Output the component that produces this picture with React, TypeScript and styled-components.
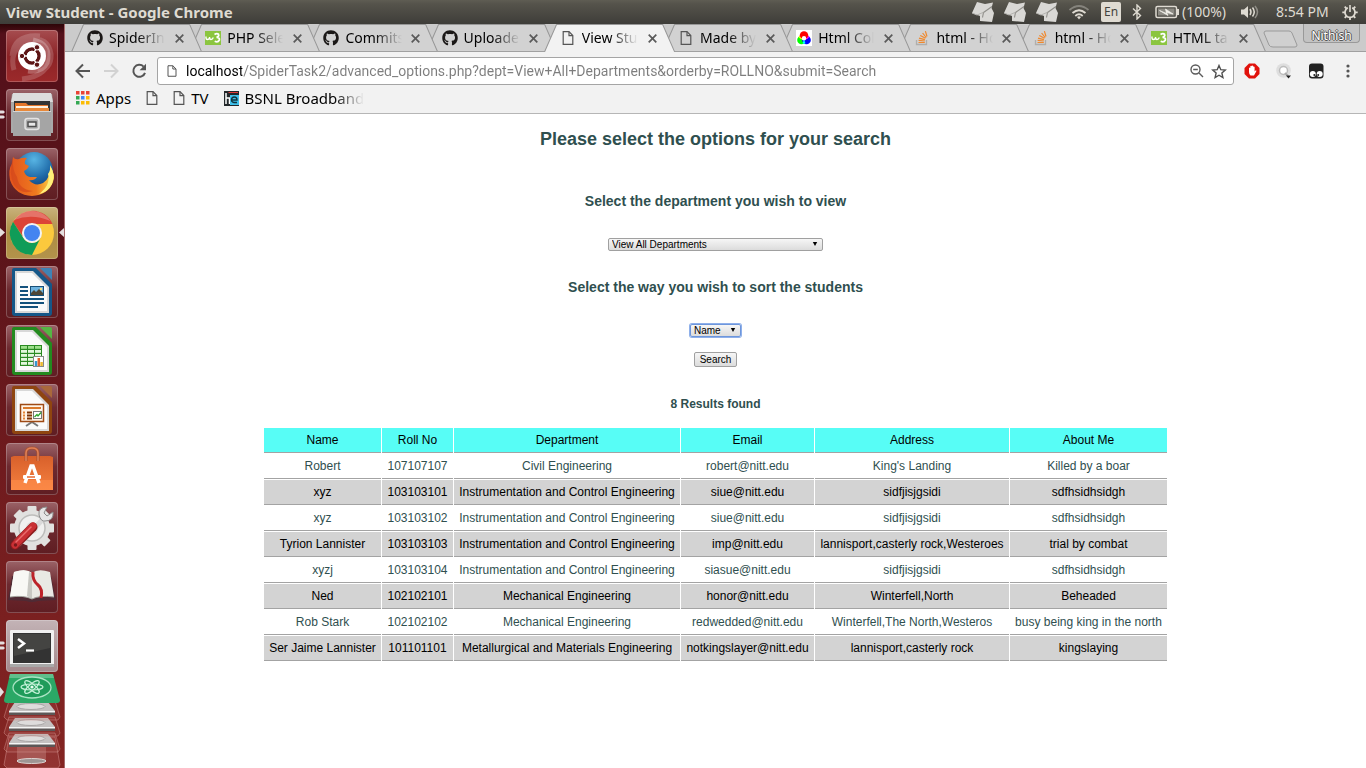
import React from "react";
import styled, { createGlobalStyle, css } from "styled-components";
import { FaGithub } from "react-icons/fa";

const GlobalStyle = createGlobalStyle`
  * { box-sizing: border-box; }
  html, body { margin: 0; padding: 0; }
  body { background: #fff; font-family: "Noto Sans", "Open Sans", sans-serif; }
  button { font: inherit; margin: 0; padding: 0; border: 0; background: none; color: inherit; }
  svg { display: block; flex: none; }
`;

/* ---------- desktop shell ---------- */

const Desktop = styled.div`
  min-height: 100vh;
  display: flex;
  flex-direction: column;
`;

const MenuBar = styled.header`
  height: 24px;
  flex: none;
  display: flex;
  justify-content: space-between;
  align-items: center;
  padding: 0 8px 0 6px;
  background: linear-gradient(#5f5d53 0, #55534b 4px, #3e3d39 24px);
  color: #dfdbd2;
`;

const WindowTitle = styled.div`
  font-size: 15px;
  line-height: 24px;
  font-weight: 700;
`;

const Tray = styled.div`
  display: grid;
  grid-template-columns: 32px 32px 32px 33px 31px 23px 27px 58px 36px 66px 16px;
  align-items: center;
  height: 24px;
  font-size: 14px;
  line-height: 24px;
  white-space: nowrap;
`;

const LanguageBadge = styled.button`
  width: 20px;
  height: 20px;
  border-radius: 2px;
  background: #dfdbd2;
  color: #45433d;
  font-size: 12px;
  line-height: 20px;
`;

const Body = styled.div`
  flex: 1;
  display: flex;
`;

const Launcher = styled.nav`
  width: 65px;
  flex: none;
  padding: 6px 6px 0;
  border-right: 1px solid #a5696a;
  background: linear-gradient(#2d0508 0, #54101a 10px, #5b141a 30%, #701b1e 60%, #842522 100%);
`;

const TileList = styled.div`
  display: flex;
  flex-direction: column;
  gap: 7px;
`;

const tileTone = {
  plain: "linear-gradient(#9b6368 0, #6d2a30 45%, #5f1d22 100%)",
  red: "linear-gradient(#a64d50, #8c2326 50%, #9c2a2b)",
  gold: "linear-gradient(#c9b27c, #ad8d43 50%, #b3934b)",
  pale: "linear-gradient(#c3b3b6, #a3898c)",
};

const Tile = styled.button<{ $tone: keyof typeof tileTone }>`
  position: relative;
  display: block;
  width: 52px;
  height: 52px;
  border-radius: 4px;
  background: ${(p) => tileTone[p.$tone]};
  box-shadow: inset 0 0 0 1px rgba(255, 255, 255, 0.22);
`;

const Pips = styled.svg<{ $side: "left" | "right" }>`
  position: absolute;
  top: 20px;
  ${(p) => (p.$side === "left" ? css`left: -6px;` : css`right: -6px;`)}
`;

const Stack = styled.div`
  padding-top: 1px;
  margin: 0 -6px;
`;

/* ---------- browser chrome ---------- */

const Browser = styled.div`
  flex: 1;
  min-width: 0;
  display: flex;
  flex-direction: column;
`;

const TabStrip = styled.div`
  height: 28px;
  flex: none;
  display: flex;
  align-items: flex-start;
  justify-content: space-between;
  padding: 0 6px 0 6px;
  background: #cbcbcb;
  border-bottom: 1px solid #a0a0a0;
`;

const Tabs = styled.div`
  display: flex;
  flex: 0 1 1192px;
  min-width: 0;
  padding-right: 10px;
`;

const Tab = styled.div<{ $order: number }>`
  position: relative;
  z-index: ${(p) => p.$order};
  flex: 1 1 0;
  min-width: 0;
  height: 28px;
  margin-right: -13px;
  padding: 0 17px 0 16px;
  display: flex;
  align-items: center;
  gap: 6px;
  isolation: isolate;
`;

const TabShape = styled.svg`
  position: absolute;
  inset: 0;
  width: 100%;
  height: 28px;
  z-index: -1;
`;

const Favicon = styled.span`
  width: 16px;
  flex: none;
  display: flex;
  justify-content: center;
`;

const TabTitle = styled.span`
  flex: 1;
  min-width: 0;
  white-space: nowrap;
  font-size: 14px;
  line-height: 28px;
  color: #000;
  mask-image: linear-gradient(90deg, #000 calc(100% - 30px), transparent calc(100% - 2px));
`;

const IconButton = styled.button<{ $w: number }>`
  width: ${(p) => p.$w}px;
  height: 28px;
  flex: none;
  display: flex;
  align-items: center;
  justify-content: center;
`;

const StripEnd = styled.div`
  flex: 1;
  display: flex;
  justify-content: space-between;
  align-items: flex-start;
`;

const NewTab = styled.button`
  height: 28px;
  padding: 2px 0 0 0;
  display: flex;
  align-items: center;
`;

const Profile = styled.button`
  width: 57px;
  height: 19px;
  padding-top: 3px;
  border: 1px solid #999;
  border-top: 0;
  border-radius: 0 0 4px 4px;
  background: #c3c3c3;
  color: #fff;
  font-size: 12px;
  line-height: 18px;
  text-align: center;
  text-shadow: 1px 0 #555, -1px 0 #555, 0 1px #555, 0 -1px #555;
`;

const Toolbar = styled.div`
  flex: none;
  height: 62px;
  background: #f2f2f2;
  border-bottom: 1px solid #b6b6b6;
`;

const NavRow = styled.div`
  display: flex;
  align-items: center;
  padding: 5px 2px 0 4px;
`;

const NavButtons = styled.div`
  display: flex;
  width: 88px;
`;

const AddressBar = styled.div`
  flex: 1;
  min-width: 0;
  height: 28px;
  display: flex;
  align-items: center;
  padding: 0 3px 0 9px;
  border: 1px solid #a5a5a5;
  border-radius: 3px;
  background: #fff;
`;

const AddressInput = styled.input`
  flex: 1;
  min-width: 0;
  height: 26px;
  margin-left: 9px;
  padding: 0;
  border: 0;
  outline: 0;
  font-family: Roboto, "Noto Sans", sans-serif;
  font-size: 14px;
  background: linear-gradient(90deg, #000 56px, #7d7d7d 56px);
  background-clip: text;
  -webkit-text-fill-color: transparent;
`;

const Extensions = styled.div`
  display: flex;
  padding-left: 2px;
`;

const BookmarkRow = styled.div`
  display: flex;
  align-items: center;
  height: 26px;
  padding-left: 11px;
  gap: 15px;
`;

const Bookmark = styled.a<{ $fade?: boolean }>`
  display: flex;
  align-items: center;
  gap: 6px;
  white-space: nowrap;
  color: #000;
  text-decoration: none;
  font-size: 15px;
  line-height: 24px;
  ${(p) =>
    p.$fade &&
    css`
      mask-image: linear-gradient(90deg, #000 calc(100% - 30px), transparent);
    `}
`;

/* ---------- page ---------- */

const Page = styled.main`
  flex: 1;
  padding: 14px 8px 40px;
  display: flex;
  flex-direction: column;
  align-items: center;
  background: #fff;
  color: #2f4f4f;
  font-family: "Liberation Sans", Arial, sans-serif;
  font-size: 12px;
`;

const SearchForm = styled.form`
  display: flex;
  flex-direction: column;
  align-items: center;
`;

const PageTitle = styled.h2`
  margin: 0;
  font-size: 18px;
  line-height: 22px;
`;

const Question = styled.label<{ $top: number }>`
  margin: ${(p) => p.$top}px 0 28px;
  font-size: 14px;
  font-weight: 700;
  line-height: 18px;
`;

const controlLook = css`
  border: 1px solid #a0a0a0;
  border-radius: 2px;
  background: linear-gradient(#f6f6f6, #dcdcdc);
  color: #000;
  font-family: "Liberation Sans", Arial, sans-serif;
  font-size: 10px;
`;

const SelectBox = styled.span<{ $w: number }>`
  position: relative;
  display: block;
  width: ${(p) => p.$w}px;
`;

const Select = styled.select<{ $active?: boolean }>`
  ${controlLook}
  display: block;
  width: 100%;
  height: 13px;
  margin: 0;
  padding: 0 3px;
  line-height: 11px;
  appearance: none;
  outline: 0;
  ${(p) =>
    p.$active &&
    css`
      border-color: #6d96dc;
      box-shadow: 0 0 0 1px #8fb0ea;
    `}
`;

const Arrow = styled.svg`
  position: absolute;
  right: 5px;
  top: 4px;
  pointer-events: none;
`;

const SubmitButton = styled.button`
  ${controlLook}
  width: 43px;
  height: 15px;
  margin-top: 15px;
  line-height: 13px;
`;

const ResultCount = styled.h4`
  margin: 30px 0 16px;
  font-size: 12px;
  line-height: 14px;
`;

const Results = styled.table`
  border-collapse: separate;
  border-spacing: 1px;
  text-align: center;
  line-height: 14px;

  th, td {
    padding: 5px;
    border-bottom: 1px solid #a3a3a3;
    white-space: nowrap;
    font-weight: 400;
  }
  th {
    background: #57fdf6;
    color: #000;
  }
  tbody tr:nth-child(even) td {
    background: #d3d3d3;
    color: #000;
  }
`;

const HeadCell = styled.th<{ $w: number }>`
  width: ${(p) => p.$w}px;
`;

/* ---------- small icons ---------- */

const DocIcon = ({ s = 14 }: { s?: number }) => (
  <svg width={s === 14 ? 12 : 10} height={s} viewBox="0 0 12 14" fill="none" stroke="#555" strokeWidth="1.2">
    <path d="M1.2 .7H7L10.8 4.5V13.3H1.2Z" />
    <path d="M7 .7V4.6H10.8" />
  </svg>
);

const W3Icon = () => (
  <svg width="16" height="16" viewBox="0 0 16 16">
    <rect y="1" width="16" height="14" fill="#8bc53f" />
    <path d="M1 6.5V8Q1 9.5 2.5 9.5T4.5 8V7Q4.5 9.500 6 9.500T8.300 7.500" fill="none" stroke="#fff" strokeWidth="1.400" />
    <path d="M9.500 4.500Q12 3 13.500 4.300Q14.500 6.300 11.600 7.400Q15 7.500 14.300 10.200Q13 12.800 9.700 11.300" fill="none" stroke="#fff" strokeWidth="1.800" />
  </svg>
);

const ColorIcon = () => (
  <svg width="16" height="16" viewBox="0 0 16 16">
    <rect width="16" height="16" fill="#fff" />
    <circle cx="5.500" cy="10" r="4.300" fill="#0f0" />
    <circle cx="10.500" cy="10" r="4.300" fill="#00f" />
    <circle cx="8" cy="5.500" r="4.300" fill="#f00" />
    <path d="M3.800 6Q4.500 8.500 8 9.800Q4.500 10 2.500 7Z" fill="#ff0" />
    <path d="M12.200 6Q11.500 8.500 8 9.800Q11.500 10 13.500 7Z" fill="#f0f" />
    <path d="M8 9.500L6.500 13.300Q8 14 9.500 13.300Z" fill="#0ff" />
    <circle cx="8" cy="8.300" r="2.200" fill="#fff" />
  </svg>
);

const StackIcon = () => (
  <svg width="16" height="16" viewBox="0 0 16 16" fill="none">
    <path d="M2.500 10V14.500H12.500V10" stroke="#b0aeac" strokeWidth="1.300" />
    <g stroke="#f0882c" strokeWidth="1.200">
      <path d="M4.500 12.500H10.800M4.600 10.300L10.800 11M5 8.100L10.900 9.600M6.300 5.400L11.500 8.300M8.600 3L12.200 7.500M11.400 1.200L13 6.500" />
    </g>
  </svg>
);

const CardsIcon = () => (
  <svg width="22" height="22" viewBox="0 0 22 22">
    <path d="M5 1L13 3L21 1.500L19.500 7L22 12L20 21L8 20L8 15L0 12Z" fill="#d9d8d5" />
    <path d="M0 12L5 14L11 11.500" stroke="#b4b3af" fill="none" />
    <path d="M20 5.500L11.500 11.500M11.500 11.500L10.500 16.500" stroke="#8f8e89" strokeWidth="1.100" fill="none" />
  </svg>
);

const WifiIcon = () => (
  <svg width="22" height="16" viewBox="0 0 22 16" fill="none" strokeWidth="1.800">
    <path d="M1.500 6Q11-2 20.500 6" stroke="#85837c" />
    <path d="M4.500 9Q11 3.500 17.500 9" stroke="#dfdbd2" />
    <path d="M7.300 12Q11 8.500 14.700 12" stroke="#dfdbd2" />
    <path d="M9 13L11 15.500L13 13Q11 11.500 9 13Z" fill="#dfdbd2" />
  </svg>
);

const BluetoothIcon = () => (
  <svg width="10" height="16" viewBox="0 0 10 16" fill="none" stroke="#dfdbd2" strokeWidth="1.400">
    <path d="M1 4.500L8.500 11.500L5 15V1L8.500 4.500L1 11.500" />
  </svg>
);

const BatteryIcon = () => (
  <svg width="25" height="14" viewBox="0 0 25 14">
    <rect x="1" y="1.500" width="20.500" height="11" rx="1.500" fill="none" stroke="#dfdbd2" strokeWidth="1.500" />
    <rect x="3" y="3.500" width="16.500" height="7" fill="#8d8b84" />
    <rect x="22" y="4" width="2" height="6" fill="#dfdbd2" />
    <path d="M4.500 5.500L11.500 8.500L10.500 4L18 9L11.500 7.500L13 10.500Z" fill="#f2f0ea" stroke="#f2f0ea" strokeWidth=".7" />
  </svg>
);

const VolumeIcon = () => (
  <svg width="20" height="16" viewBox="0 0 20 16" fill="none" strokeWidth="1.500">
    <path d="M1 5.500H4L8 2V14L4 10.500H1Z" fill="#dfdbd2" />
    <path d="M10 5Q12 8 10 11" stroke="#dfdbd2" />
    <path d="M12.500 3.500Q16 8 12.500 12.500" stroke="#dfdbd2" />
    <path d="M15 2Q20 8 15 14" stroke="#8f8d86" />
  </svg>
);

const GearIcon = () => (
  <svg width="16" height="16" viewBox="0 0 16 16" fill="none" stroke="#dfdbd2">
    <path d="M5.800 3.800A5 5 0 1 0 10.200 3.800" strokeWidth="1.700" />
    <path d="M8 1V8" strokeWidth="1.600" />
    <path d="M2.700 2.700L4.600 4.600M13.300 2.700L11.400 4.600M.3 8.300H3M13 8.300H15.700M2.700 13.900L4.600 12M13.300 13.900L11.400 12M8 13.300V16" strokeWidth="1.800" />
  </svg>
);

const CloseIcon = () => (
  <svg width="9" height="9" viewBox="0 0 9 9" stroke="#5a5a5a" strokeWidth="1.700">
    <path d="M.7 .7L8.300 8.300M8.300 .7L.7 8.300" />
  </svg>
);

const BackIcon = ({ color, flip }: { color: string; flip?: boolean }) => (
  <svg width="16" height="16" viewBox="0 0 16 16" fill="none" stroke={color} strokeWidth="2">
    <path d={flip ? "M1 8H14M8 1.500L14.500 8L8 14.500" : "M15 8H2M8 1.500L1.500 8L8 14.500"} />
  </svg>
);

const ReloadIcon = () => (
  <svg width="16" height="16" viewBox="0 0 16 16">
    <path d="M12.600 3.600A6 6 0 1 0 14 9.800" fill="none" stroke="#555" strokeWidth="2" />
    <path d="M15 .8V7.200H8.600Z" fill="#555" />
  </svg>
);

const ZoomOutIcon = () => (
  <svg width="14" height="14" viewBox="0 0 14 14" fill="none" stroke="#5a5a5a" strokeWidth="1.400">
    <circle cx="5.500" cy="5.500" r="4.500" />
    <path d="M3.200 5.500H7.800M9 9L13 13" />
  </svg>
);

const StarIcon = () => (
  <svg width="16" height="15" viewBox="0 0 16 15" fill="none" stroke="#4f4f4f" strokeWidth="1.400">
    <path d="M8 1.500L9.800 5.700L14.300 6.100L10.900 9.100L11.900 13.500L8 11.200L4.100 13.500L5.100 9.100L1.700 6.100L6.200 5.700Z" />
  </svg>
);

const BlockIcon = () => (
  <svg width="16" height="16" viewBox="0 0 16 16">
    <path d="M5 .5H11L15.500 5V11L11 15.500H5L.5 11V5Z" fill="#e1120c" />
    <path d="M5 9V5Q5.700 4 6.300 5V3.200Q7 2.300 7.700 3.200V2.700Q8.500 2 9.200 2.900V3.700Q10 3 10.600 4V8.500L11.800 7.300Q13 7.500 12.200 8.500L10 12.500H6.500Q5 11 5 9Z" fill="#fff" />
  </svg>
);

const SearchBadgeIcon = () => (
  <svg width="16" height="16" viewBox="0 0 16 16">
    <circle cx="7.500" cy="7.500" r="7.300" fill="#dedede" />
    <circle cx="7.500" cy="7.500" r="4" fill="#fff" stroke="#bcbcbc" strokeWidth="1.500" />
    <path d="M9 10L12 13" stroke="#aaa" strokeWidth="2" />
    <path d="M10 12.500H15L12.500 15.500Z" fill="#222" />
  </svg>
);

const MonkeyIcon = () => (
  <svg width="16" height="16" viewBox="0 0 16 16">
    <rect x="1" y=".5" width="14.500" height="15" rx="3" fill="#222" />
    <circle cx="4.800" cy="11" r="3" fill="#fff" />
    <circle cx="11.700" cy="11" r="3" fill="#fff" />
    <circle cx="6.300" cy="12" r="1" fill="#222" />
    <circle cx="10.200" cy="12" r="1" fill="#222" />
  </svg>
);

const MenuIcon = () => (
  <svg width="4" height="14" viewBox="0 0 4 14" fill="#555">
    <circle cx="2" cy="2" r="1.600" />
    <circle cx="2" cy="7" r="1.600" />
    <circle cx="2" cy="12" r="1.600" />
  </svg>
);

const AppsIcon = () => (
  <svg width="14" height="14" viewBox="0 0 14 14">
    {["#ea4335", "#ea4335", "#ea4335", "#34a853", "#4285f4", "#fbbc05", "#34a853", "#fbbc05", "#fbbc05"].map((c, i) => (
      <rect key={i} x={(i % 3) * 5} y={Math.floor(i / 3) * 5} width="3.500" height="3.500" fill={c} />
    ))}
  </svg>
);

const BsnlIcon = () => (
  <svg width="15" height="15" viewBox="0 0 15 15">
    <rect width="15" height="15" fill="#23282b" />
    <path d="M4.500 1H14V2H4.500Z" fill="#e23b3b" />
    <path d="M2 2V13M2 7H5.500V13" stroke="#fff" strokeWidth="1.500" fill="none" />
    <rect x="6" y="4" width="9" height="10" fill="#3fc0ea" />
    <path d="M7.500 9H13Q13 6 10.300 6T7.500 9T13 11.500" stroke="#10343f" strokeWidth="1.400" fill="none" />
  </svg>
);

/* ---------- launcher artwork ---------- */

const art = { width: 52, height: 52, viewBox: "0 0 52 52" };

const DashArt = () => (
  <svg {...art}>
    <path d="M8 40Q2 18 24 10Q42 6 45 24Q46 38 32 42M16 49Q46 46 44 20M6 26Q8 4 34 6" fill="none" stroke="#fff" strokeOpacity=".18" strokeWidth="5" />
    <path d="M27 10Q46 14 41 33Q36 43 22 41" fill="none" stroke="#fff" strokeOpacity=".25" strokeWidth="5" />
    <circle cx="26" cy="26" r="14" fill="#fff" />
    <circle cx="26" cy="26" r="7" fill="none" stroke="#5c1414" strokeWidth="3.400" />
    <path d="M26 26L13 26M26 26L32.500 14.700M26 26L32.500 37.300" stroke="#fff" strokeWidth="1.500" />
    <circle cx="26" cy="26" r="5.200" fill="#fff" />
    <g fill="#5c1414" stroke="#fff">
      <circle cx="16" cy="26" r="2.700" />
      <circle cx="31" cy="17.300" r="2.700" />
      <circle cx="31" cy="34.700" r="2.700" />
    </g>
  </svg>
);

const FilesArt = () => (
  <svg {...art}>
    <path d="M6 5H46L47 14V44H5V14Z" fill="#a9a9a9" />
    <path d="M7 4H45L47 13H5Z" fill="#dcdcdc" />
    <rect x="8" y="12" width="36" height="12" fill="#343434" />
    <path d="M9 14H20L22 16H42V24H9Z" fill="#e5762a" />
    <path d="M10 17H42V19H10Z" fill="#fff1df" />
    <path d="M9 19H43V23H9Z" fill="#e8893a" />
    <path d="M7 22H45V47H7Z" fill="#a5a5a5" />
    <path d="M7 22H45V23H7Z" fill="#d6d6d6" />
    <rect x="19" y="29.500" width="14" height="11" rx="2.500" fill="#b0b0b0" stroke="#e3e3e3" strokeWidth="1.500" />
    <rect x="22" y="33" width="8" height="4.500" fill="#e8e8e8" stroke="#4e4e4e" strokeWidth="1.500" />
  </svg>
);

const FirefoxArt = () => (
  <svg {...art}>
    <defs>
      <radialGradient id="ffGlobe" cx=".5" cy=".2" r=".8">
        <stop offset="0" stopColor="#58b5e4" />
        <stop offset=".6" stopColor="#1f6aa8" />
        <stop offset="1" stopColor="#123c74" />
      </radialGradient>
      <linearGradient id="ffTail" x1="0" x2="1">
        <stop offset="0" stopColor="#e3541d" />
        <stop offset=".6" stopColor="#ee7a1f" />
        <stop offset="1" stopColor="#ffe04a" />
      </linearGradient>
    </defs>
    <circle cx="28" cy="23" r="19" fill="url(#ffGlobe)" />
    <path d="M7 9Q9 12 13 11Q17 9 21 10Q18 13 19 16L23 18Q22 21 18 23Q19 28 24 29L31 29Q28 33 23 32Q29 39 37 35Q45 30 44 18Q50 27 47 34Q42 47 26 48Q9 47 4 32Q2 21 6 16Z" fill="url(#ffTail)" />
    <path d="M7 10Q6 22 11 29Q13 42 27 43Q15 47 8 37Q2 25 7 10Z" fill="#d1441b" opacity=".6" />
    <path d="M44 17Q50 27 46 36Q42 44 33 46Q45 37 42 26Q45 22 44 17Z" fill="#ffef7a" />
  </svg>
);

const ChromeArt = () => (
  <svg {...art}>
    <circle cx="26" cy="26" r="22" fill="#fbc93d" />
    <path d="M7 15A22 22 0 0 1 46.500 17H26A9.500 9.500 0 0 0 17.500 30.500Z" fill="#dc4437" />
    <path d="M7 14.800A22 22 0 0 0 26 48L34.500 31A9.700 9.700 0 0 1 17.500 31Z" fill="#109c58" />
    <path d="M8 13A22 22 0 0 1 44.500 14Q26 6 8 13Z" fill="#fff" opacity=".25" />
    <circle cx="26" cy="26" r="10" fill="#f3f3f3" />
    <circle cx="26" cy="26" r="8" fill="#4484f0" />
  </svg>
);

const OfficeArt = ({ color, fold, children }: { color: string; fold: string; children: React.ReactNode }) => (
  <svg {...art}>
    <path d="M8 2H30L46 18V47Q46 50 43 50H9Q6 50 6 47V4Q6 2 8 2Z" fill={color} />
    <path d="M9 5H27L43 21V47H9Z" fill="#d8d8d8" />
    <path d="M11 7H26L41 22V45H11Z" fill="#fbfbfb" />
    <path d="M34 2H44Q46 2 46 4V14Z" fill={fold} />
    {children}
  </svg>
);

const WriterArt = () => (
  <OfficeArt color="#155788" fold="#3f83b5">
    <path d="M14 21H22M14 25H22M14 29H22M14 33H38M14 37H38M14 41H32" stroke="#13517c" strokeWidth="2" />
    <rect x="24.500" y="20.500" width="13" height="9" fill="#6cb2df" stroke="#174f78" />
    <path d="M25 29V27L28 24L30 26L33 23L37 27V29Z" fill="#4e4636" />
    <circle cx="35" cy="23" r="1.200" fill="#ffe27a" />
  </OfficeArt>
);

const CalcArt = () => (
  <OfficeArt color="#238a1f" fold="#55b544">
    <rect x="14" y="20" width="22" height="21" fill="#2a8a22" />
    {[0, 1, 2, 3, 4].map((r) =>
      [0, 1, 2].map((c) => (
        <rect key={`${r}-${c}`} x={15 + c * 7} y={21 + r * 4} width="6" height="2.800" fill={r === 0 ? "#9ee08c" : "#e2f7dc"} />
      ))
    )}
    <rect x="27.500" y="31.500" width="10" height="10" fill="#fff" stroke="#888" />
    <path d="M30 41V36" stroke="#3897cf" strokeWidth="2.500" />
    <path d="M32.800 41V33" stroke="#e2632b" strokeWidth="2.500" />
    <path d="M35.600 41V37" stroke="#edb92e" strokeWidth="2.500" />
  </OfficeArt>
);

const ImpressArt = () => (
  <OfficeArt color="#8f4510" fold="#a9683b">
    <path d="M26 38L20 42M26 38L32 42" stroke="#777" strokeWidth="2" />
    <rect x="14.500" y="20.500" width="23" height="17" fill="#fff4e7" stroke="#9e4a14" strokeWidth="1.500" />
    <path d="M17 24H35" stroke="#d9792c" strokeWidth="2" />
    <path d="M17 28.500H19M17 31.500H19M17 34.500H19" stroke="#e58636" strokeWidth="1.800" />
    <path d="M21 28.500H26M21 31.500H26M21 34.500H26" stroke="#7e3406" strokeWidth="1.800" />
    <rect x="27.500" y="27.500" width="8" height="7" fill="#fff" stroke="#777" />
    <path d="M28.500 33L31 30.500L32 32L35 28.500" fill="none" stroke="#2ba52b" strokeWidth="1.300" />
  </OfficeArt>
);

const SoftwareArt = () => (
  <svg {...art}>
    <defs>
      <linearGradient id="bag" x2="0" y2="1">
        <stop offset="0" stopColor="#d8602b" />
        <stop offset="1" stopColor="#f5803f" />
      </linearGradient>
    </defs>
    <path d="M5 14L8 13H44L47 14V47H5Z" fill="url(#bag)" />
    <path d="M5 37H47V47H5Z" fill="#ff8d4b" opacity=".6" />
    <path d="M20 18V10Q20 5 26 5T32 10V18" fill="none" stroke="#a8502f" strokeWidth="3" />
    <path d="M20 18V10Q20 5 26 5T32 10V18" fill="none" stroke="#e08158" strokeWidth="1.500" />
    <path d="M19 40L25 23H27L33 40" fill="none" stroke="#fff" strokeWidth="3.500" />
    <rect x="17" y="32" width="18" height="4" rx="1" fill="#fff" />
    <path d="M21 34H29" stroke="#e6672f" strokeWidth="1.500" />
  </svg>
);

const SettingsArt = () => (
  <svg {...art}>
    <g transform="translate(26 26)" fill="#e1e1df">
      <circle r="18" />
      {[0, 45, 90, 135, 180, 225, 270, 315].map((a) => (
        <rect key={a} x="-4.500" y="-22" width="9" height="9" rx="1" transform={`rotate(${a})`} />
      ))}
      <circle r="13" fill="#f0f0ef" stroke="#bdbdbb" strokeWidth="1.500" />
      <circle r="6" fill="#dcdcda" />
    </g>
    <path d="M21 34L38 16" stroke="#d9d9d9" strokeWidth="5" />
    <path d="M33 13Q32 5 41 5L38 11L41 14L47 10Q48 19 39 19Q35 20 33 13Z" fill="#e6e6e6" stroke="#8b8b8b" />
    <path d="M9 43L27 25" stroke="#8d1b1d" strokeWidth="9" strokeLinecap="round" />
    <path d="M9 43L27 24" stroke="#c93034" strokeWidth="7" strokeLinecap="round" />
    <path d="M10 40L25 25" stroke="#ea6c6d" strokeWidth="1.500" strokeLinecap="round" />
    <circle cx="9.500" cy="43" r="1.700" fill="#7a191b" />
  </svg>
);

const BookArt = () => (
  <svg {...art}>
    <path d="M6 15L2 39L20 40Q26 42 32 40L50 39L45 15Z" fill="#4f2b35" />
    <path d="M8 11Q20 7 26 12Q32 7 44 11L48 36Q34 34 26 38Q18 34 4 36Z" fill="#e9e9e4" />
    <path d="M8 11Q20 7 26 12V38Q18 34 4 36Z" fill="#f8f8f5" />
    <path d="M23 11L26 12V38L21 35Z" fill="#c8c8c3" />
    <path d="M4 36Q18 34 26 38Q34 34 48 36" fill="none" stroke="#a1a19b" />
    <path d="M27 11Q26 19 32 24Q37 28 35 37" fill="none" stroke="#bc2229" strokeWidth="3" />
  </svg>
);

const TerminalArt = () => (
  <svg {...art}>
    <rect x="4" y="10" width="44" height="37" rx="1" fill="#f1f1f1" />
    <rect x="4" y="44" width="44" height="3" fill="#a9a9a9" />
    <rect x="7" y="13" width="38" height="30" fill="#333" />
    <path d="M8 14H44V28L8 36Z" fill="#444442" />
    <path d="M12 19L18 23.500L12 28" fill="none" stroke="#fff" strokeWidth="2.500" />
    <path d="M20 30.500H28" stroke="#fff" strokeWidth="2.200" />
  </svg>
);

const FoldedStack = () => (
  <svg width="64" height="95" viewBox="0 0 64 95">
    <path d="M9 64L4 92L7 95H58L60 92L55 64Z" fill="#c8706e" fillOpacity=".2" stroke="#d79693" strokeOpacity=".5" />
    <path d="M17 73H46V88H17Z" fill="#c98b88" opacity=".4" />
    <ellipse cx="31.500" cy="88" rx="14.500" ry="2.500" fill="#9e9593" stroke="#ddd2d0" />
    {[32, 16, 0].map((y) => (
      <g key={y} transform={`translate(0 ${y})`}>
        <path d="M9 28L4 44L7 47H58L60 44L55 28Z" fill="#c8706e" fillOpacity=".15" stroke="#d79693" strokeOpacity=".45" />
        <path d="M15 29H48L55 38H9Z" fill="#c4c1c1" />
        <path d="M9 38H55V42H9Z" fill="#5c5757" />
        <path d="M9 38H55V39.500H9Z" fill="#f5f5f5" />
        <ellipse cx="31" cy="33.500" rx="14" ry="3" fill="#dedcdc" stroke="#a9a6a6" />
      </g>
    ))}
    <path d="M10 1H53L60 27Q60 30 57 30H7Q4 30 4 27Z" fill="#2ba866" />
    <path d="M10 1H53L54 5H9Z" fill="#77c99c" opacity=".7" />
    <ellipse cx="32" cy="14.500" rx="19" ry="10.500" fill="#1f9b5a" stroke="#a9e3c3" strokeWidth="1.300" />
    <g fill="none" stroke="#c4f1d8" strokeWidth="1.200">
      <ellipse cx="32" cy="14" rx="11" ry="3" />
      <ellipse cx="32" cy="14" rx="9" ry="3" transform="rotate(40 32 14)" />
      <ellipse cx="32" cy="14" rx="9" ry="3" transform="rotate(-40 32 14)" />
    </g>
    <circle cx="32" cy="14" r="1.600" fill="#eafff2" />
    <path d="M0 14L4 19L0 24Z" fill="#e5dfdf" />
  </svg>
);

const PairMark = () => (
  <Pips $side="left" width="5" height="12" viewBox="0 0 5 12" fill="#e5dfdf">
    <path d="M0 1.500H3.500L5 3L3.500 4.500H0ZM0 6.500H3.500L5 8L3.500 9.500H0Z" />
  </Pips>
);

const ActiveMarks = () => (
  <>
    <Pips $side="left" width="5" height="10" viewBox="0 0 5 10" fill="#e5dfdf">
      <path d="M0 1L5 5.500L0 10Z" />
    </Pips>
    <Pips $side="right" width="5" height="10" viewBox="0 0 5 10" fill="#e5dfdf">
      <path d="M5 1L0 5.500L5 10Z" />
    </Pips>
  </>
);

/* ---------- data ---------- */

type LauncherItem = { name: string; tone: keyof typeof tileTone; art: React.ReactNode; mark?: React.ReactNode };

const launcherItems: LauncherItem[] = [
  { name: "Dash", tone: "red", art: <DashArt /> },
  { name: "Files", tone: "plain", art: <FilesArt />, mark: <PairMark /> },
  { name: "Firefox", tone: "plain", art: <FirefoxArt /> },
  { name: "Chrome", tone: "gold", art: <ChromeArt />, mark: <ActiveMarks /> },
  { name: "Writer", tone: "plain", art: <WriterArt /> },
  { name: "Calc", tone: "plain", art: <CalcArt /> },
  { name: "Impress", tone: "plain", art: <ImpressArt /> },
  { name: "Software", tone: "plain", art: <SoftwareArt /> },
  { name: "Settings", tone: "plain", art: <SettingsArt /> },
  { name: "Dictionary", tone: "plain", art: <BookArt /> },
  { name: "Terminal", tone: "pale", art: <TerminalArt />, mark: <PairMark /> },
];

const tabs = [
  { title: "SpiderIn", icon: <FaGithub size={16} color="#1b1817" /> },
  { title: "PHP Sele", icon: <W3Icon /> },
  { title: "Commits", icon: <FaGithub size={16} color="#1b1817" /> },
  { title: "Uploade", icon: <FaGithub size={16} color="#1b1817" /> },
  { title: "View Stu", icon: <DocIcon />, active: true },
  { title: "Made by", icon: <DocIcon /> },
  { title: "Html Col", icon: <ColorIcon /> },
  { title: "html - Ho", icon: <StackIcon /> },
  { title: "html - Ho", icon: <StackIcon /> },
  { title: "HTML ta", icon: <W3Icon /> },
];

const columns = [
  { label: "Name", width: 117 },
  { label: "Roll No", width: 71 },
  { label: "Department", width: 226 },
  { label: "Email", width: 133 },
  { label: "Address", width: 194 },
  { label: "About Me", width: 157 },
];

const ICE = "Instrumentation and Control Engineering";
const students = [
  ["Robert", "107107107", "Civil Engineering", "robert@nitt.edu", "King's Landing", "Killed by a boar"],
  ["xyz", "103103101", ICE, "siue@nitt.edu", "sidfjisjgsidi", "sdfhsidhsidgh"],
  ["xyz", "103103102", ICE, "siue@nitt.edu", "sidfjisjgsidi", "sdfhsidhsidgh"],
  ["Tyrion Lannister", "103103103", ICE, "imp@nitt.edu", "lannisport,casterly rock,Westeroes", "trial by combat"],
  ["xyzj", "103103104", ICE, "siasue@nitt.edu", "sidfjisjgsidi", "sdfhsidhsidgh"],
  ["Ned", "102102101", "Mechanical Engineering", "honor@nitt.edu", "Winterfell,North", "Beheaded"],
  ["Rob Stark", "102102102", "Mechanical Engineering", "redwedded@nitt.edu", "Winterfell,The North,Westeros", "busy being king in the north"],
  ["Ser Jaime Lannister", "101101101", "Metallurgical and Materials Engineering", "notkingslayer@nitt.edu", "lannisport,casterly rock", "kingslaying"],
];

const DropArrow = () => (
  <Arrow width="6" height="5" viewBox="0 0 6 5">
    <path d="M.8 0H5.200L3 4Z" fill="#000" />
  </Arrow>
);

export default function App() {
  return (
    <Desktop>
      <GlobalStyle />
      <MenuBar>
        <WindowTitle>View Student - Google Chrome</WindowTitle>
        <Tray>
          <CardsIcon />
          <CardsIcon />
          <CardsIcon />
          <WifiIcon />
          <LanguageBadge>En</LanguageBadge>
          <BluetoothIcon />
          <BatteryIcon />
          <span>(100%)</span>
          <VolumeIcon />
          <span>8:54 PM</span>
          <GearIcon />
        </Tray>
      </MenuBar>
      <Body>
        <Launcher aria-label="Launcher">
          <TileList>
            {launcherItems.map((item) => (
              <Tile key={item.name} $tone={item.tone} aria-label={item.name}>
                {item.art}
                {item.mark}
              </Tile>
            ))}
          </TileList>
          <Stack>
            <FoldedStack />
          </Stack>
        </Launcher>
        <Browser>
          <TabStrip>
            <Tabs>
              {tabs.map((tab, i) => (
                <Tab key={i} $order={tab.active ? 20 : 10 - i}>
                  <TabShape viewBox="0 0 131 28" preserveAspectRatio="none">
                    <path
                      d="M0.500 28L12.500 .5H118.500L130.500 28"
                      fill={tab.active ? "#f2f2f2" : "#d2d2d2"}
                      stroke="#979797"
                    />
                    {!tab.active && <path d="M0 27.500H131" stroke="#a0a0a0" />}
                  </TabShape>
                  <Favicon>{tab.icon}</Favicon>
                  <TabTitle>{tab.title}</TabTitle>
                  <IconButton $w={12} aria-label="Close tab">
                    <CloseIcon />
                  </IconButton>
                </Tab>
              ))}
            </Tabs>
            <StripEnd>
              <NewTab aria-label="New tab">
                <svg width="35" height="18" viewBox="0 0 35 18">
                  <path d="M3 1H26Q28 1 29 3L34 15Q34 17 32 17H10Q7 17 6 15L1 3Q1 1 3 1Z" fill="#d0d0d0" stroke="#9a9a9a" />
                </svg>
              </NewTab>
              <Profile>Nithish</Profile>
            </StripEnd>
          </TabStrip>
          <Toolbar>
            <NavRow>
              <NavButtons>
                <IconButton $w={28} aria-label="Back"><BackIcon color="#555" /></IconButton>
                <IconButton $w={28} aria-label="Forward"><BackIcon color="#d2d2d2" flip /></IconButton>
                <IconButton $w={28} aria-label="Reload"><ReloadIcon /></IconButton>
              </NavButtons>
              <AddressBar>
                <DocIcon s={12} />
                <AddressInput
                  aria-label="Address"
                  defaultValue="localhost/SpiderTask2/advanced_options.php?dept=View+All+Departments&orderby=ROLLNO&submit=Search"
                />
                <IconButton $w={22} aria-label="Zoom"><ZoomOutIcon /></IconButton>
                <IconButton $w={22} aria-label="Bookmark this page"><StarIcon /></IconButton>
              </AddressBar>
              <Extensions>
                <IconButton $w={32} aria-label="Ad blocker"><BlockIcon /></IconButton>
                <IconButton $w={32} aria-label="Search extension"><SearchBadgeIcon /></IconButton>
                <IconButton $w={32} aria-label="User scripts"><MonkeyIcon /></IconButton>
                <IconButton $w={32} aria-label="Menu"><MenuIcon /></IconButton>
              </Extensions>
            </NavRow>
            <BookmarkRow>
              <Bookmark href="#apps"><AppsIcon />Apps</Bookmark>
              <Bookmark href="#page" aria-label="Page"><DocIcon /></Bookmark>
              <Bookmark href="#tv"><DocIcon />TV</Bookmark>
              <Bookmark href="#bsnl" $fade><BsnlIcon />BSNL Broadband</Bookmark>
            </BookmarkRow>
          </Toolbar>
          <Page>
            <SearchForm onSubmit={(e) => e.preventDefault()}>
              <PageTitle>Please select the options for your search</PageTitle>
              <Question htmlFor="dept" $top={42}>Select the department you wish to view</Question>
              <SelectBox $w={215}>
                <Select id="dept"><option>View All Departments</option></Select>
                <DropArrow />
              </SelectBox>
              <Question htmlFor="orderby" $top={27}>Select the way you wish to sort the students</Question>
              <SelectBox $w={51}>
                <Select id="orderby" $active><option>Name</option></Select>
                <DropArrow />
              </SelectBox>
              <SubmitButton type="submit">Search</SubmitButton>
            </SearchForm>
            <ResultCount>8 Results found</ResultCount>
            <Results>
              <thead>
                <tr>{columns.map((c) => <HeadCell key={c.label} scope="col" $w={c.width}>{c.label}</HeadCell>)}</tr>
              </thead>
              <tbody>
                {students.map((row) => (
                  <tr key={row[1]}>{row.map((cell, i) => <td key={i}>{cell}</td>)}</tr>
                ))}
              </tbody>
            </Results>
          </Page>
        </Browser>
      </Body>
    </Desktop>
  );
}
